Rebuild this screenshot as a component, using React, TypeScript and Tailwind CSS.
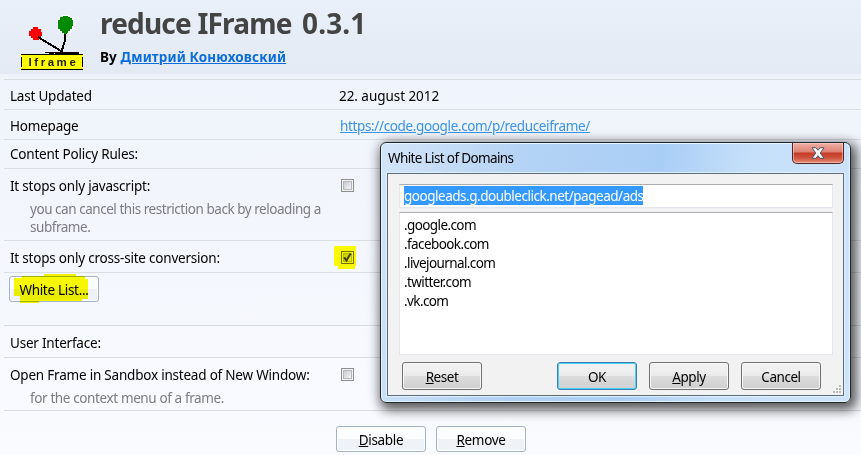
import type { ReactNode } from "react";

function Row({ className, label, children }: { className: string; label: ReactNode; children?: ReactNode }) {
  return (
    <div className={`box-border flex shrink-0 border-b border-[#d9dde4] pl-[6px] leading-[18px] ${className}`}>
      <div className="w-[330px] shrink-0 tracking-[-0.21px] whitespace-nowrap">{label}</div>
      {children}
    </div>
  );
}

function CheckBox({ checked = false }: { checked?: boolean }) {
  return (
    <div
      className={
        checked
          ? "grid h-[13px] w-[13px] place-items-center border border-[#727200] bg-[#f8f800] p-px"
          : "grid h-[13px] w-[13px] place-items-center border border-[#8e8f8f] bg-[#f4f4f4] p-px"
      }
    >
      <div
        className={
          checked
            ? "h-[9px] w-[9px] border border-[#b5b800] bg-linear-to-br from-[#c9cc00] to-[#f3f300]"
            : "h-[9px] w-[9px] border border-[#b4b8be] bg-linear-to-br from-[#c6cad0] to-[#f6f6f6]"
        }
      >
        {checked && (
          <svg width="9" height="9" viewBox="0 0 9 9" className="-mt-px -ml-px block overflow-visible">
            <path d="M1.2 4.2 L3.4 7.6 L7.6 0.6" fill="none" stroke="#3f4500" strokeWidth="2" />
          </svg>
        )}
      </div>
    </div>
  );
}

function PageButton({ children }: { children: ReactNode }) {
  return (
    <button className="h-[26px] w-[90px] rounded-[3px] border border-[#a3b3c5] bg-linear-to-b from-[#fcfdfe] from-50% to-[#eff2f6] to-50% pt-[2px] leading-[18px] shadow-[inset_0_0_0_1px_#ffffff]">
      {children}
    </button>
  );
}

function DialogButton({ children, primary = false }: { children: ReactNode; primary?: boolean }) {
  return (
    <button
      className={`h-[28px] w-[80px] shrink-0 rounded-[3px] border bg-[linear-gradient(#f3f3f3,#ebebeb_48%,#dddddd_50%,#cfcfcf)] pt-px leading-[18px] tracking-[-0.45px] ${
        primary
          ? "border-[#3c7fb1] shadow-[inset_0_0_0_1px_#48d0f8]"
          : "border-[#707070] shadow-[inset_0_0_0_1px_#f9f9f9]"
      }`}
    >
      {children}
    </button>
  );
}

function Logo() {
  return (
    <svg width="66" height="56" viewBox="0 0 66 56" className="block">
      <path d="M41 1 h7 v1 h3 v2 h2 v4 h1 v4 h-1 v3 h-2 v3 h-2 v2 h-2 v1 h-5 v-1 h-2 v-2 h-2 v-3 h-2 v-10 h2 v-2 h3z" fill="#fff" />
      <path d="M42 2 h5 v1 h2 v1 h2 v2 h1 v6 h-1 v3 h-2 v2 h-2 v2 h-1 v1 h-3 v-1 h-2 v-2 h-2 v-2 h-2 v-9 h2 v-3 h3z" fill="#008a00" />
      <path d="M12 13 h5 v2 h3 v3 h1 v4 h-1 v2 h-2 v2 h-6 v-2 h-2 v-2 h-2 v-5 h2 v-2 h2z" fill="#f00" />
      <path d="M17 23 L40 37 M44.5 20 L43.5 28 L40.5 38" fill="none" stroke="#000" strokeWidth="2" shapeRendering="crispEdges" />
      <path d="M24 38 h34 v1 h-25 v1 h-5 v-1 h-4z M34 39 h24 v1 h-24z" fill="#000" />
      <rect x="0" y="41" width="62" height="14" fill="#ff0" />
      <path d="M0 40 h62 v1 h-62z M0 55 h62 v1 h-62z M0 43 h1 v10 h-1z M61 43 h1 v10 h-1z" fill="#000" />
      <text x="7.5" y="52" textLength="47" fontFamily="Liberation Sans, sans-serif" fontSize="11.5" fontWeight="700" fill="#222">
        Iframe
      </text>
    </svg>
  );
}

const domains = [".google.com", ".facebook.com", ".livejournal.com", ".twitter.com", ".vk.com"];

function Dialog() {
  return (
    <div className="absolute top-[142px] left-[380px] flex h-[261px] w-[471px] flex-col rounded-[6px] border border-[#20282f] bg-[linear-gradient(100deg,#d3e5f8_0%,#b4d3f5_28%,#a9cef5_55%,#c5dffa_72%,#cfe4fb_100%)] px-[6px] pb-[6px] shadow-[inset_0_0_0_1px_#e6f3ff,3px_4px_12px_3px_rgba(0,0,0,0.65)]">
      <div className="flex h-[30px] shrink-0 items-start justify-between pl-px">
        <span className="pt-[6px] leading-[18px] tracking-[-0.63px]">White List of Domains</span>
        <div className="grid h-[21px] w-[52px] place-items-center rounded-b-[5px] border border-t-0 border-[#50252a] bg-[linear-gradient(#f0b0a5,#dd8073_45%,#c53a25_50%,#cf5540_75%,#e58d78)] shadow-[inset_0_0_0_1px_rgba(255,210,200,0.6)]">
          <svg width="14" height="12" viewBox="0 0 14 12">
            <path
              d="M1 .7 H4.8 L7 3.2 L9.2 .7 H13 L9.3 6 L13 11.3 H9.2 L7 8.8 L4.8 11.3 H1 L4.7 6z"
              fill="#f5f5f5"
              stroke="#535666"
            />
          </svg>
        </div>
      </div>
      <div className="relative flex grow flex-col border border-[#5c6c7b] bg-[#f2f2f2] px-[11px] pt-[10px] shadow-[0_0_0_1px_#e0f0ff]">
        <div className="flex h-[24px] w-[434px] shrink-0 items-start border border-[#e3e6ec] border-t-[#abadb3] bg-white pt-px pl-1">
          <span className="h-[19px] w-[239px] bg-[#3399ff] leading-[20px] tracking-[-0.48px] whitespace-nowrap text-white">
            googleads.g.doubleclick.net/pagead/ads
          </span>
        </div>
        <ul className="mt-[4px] h-[143px] w-[434px] shrink-0 border border-[#e3e6ec] border-t-[#abadb3] bg-white pt-[3px] pl-[4px] leading-[19px] tracking-[-0.6px]">
          {domains.map((domain) => (
            <li key={domain}>{domain}</li>
          ))}
        </ul>
        <div className="mt-[7px] flex gap-[12px] pl-[3px]">
          <DialogButton><u>R</u>eset</DialogButton>
          <div className="w-[51px] shrink-0" />
          <DialogButton primary>OK</DialogButton>
          <DialogButton><u>A</u>pply</DialogButton>
          <DialogButton>Cancel</DialogButton>
        </div>
        <svg width="8" height="8" className="absolute right-[2px] bottom-[2px]">
          <path
            d="M6 0h2v2h-2z M3 3h2v2h-2z M6 3h2v2h-2z M0 6h2v2h-2z M3 6h2v2h-2z M6 6h2v2h-2z"
            fill="#bcbcbc"
          />
        </svg>
      </div>
    </div>
  );
}

export default function App() {
  return (
    <main className="relative flex h-[455px] w-[861px] flex-col overflow-hidden bg-linear-to-b from-[#edf2fa] to-[#f9fbff] font-['Noto_Sans','Open_Sans',sans-serif] text-[13.5px] tracking-[-0.3px] text-black">
      <header className="flex h-[74px] shrink-0 bg-linear-to-b from-[#e9f0fa] to-[#e3eaf4] pl-[21px]">
        <div className="w-[79px] shrink-0 pt-[14px]">
          <Logo />
        </div>
        <div>
          <h1 className="pt-[4px] text-[28px] leading-[38px] font-bold tracking-[-0.8px] whitespace-nowrap text-[#444]">
            reduce IFrame <span className="ml-[4px] tracking-[0.1px]">0.3.1</span>
          </h1>
          <p className="pt-[6px] leading-[18px] font-bold tracking-[0.13px] whitespace-nowrap">
            By <a className="text-[#0b6cda] underline">Дмитрий Конюховский</a>
          </p>
        </div>
      </header>
      <section className="flex flex-col pl-[4px]">
        <div className="h-[6px] shrink-0 border-b border-[#d9dde4]" />
        <Row className="h-[30px] pt-[7px]" label="Last Updated">
          <span className="-ml-px tracking-[-0.05px]">22. august 2012</span>
        </Row>
        <Row className="h-[30px] pt-[7px]" label="Homepage">
          <a className="tracking-[-0.36px] text-[#3b93e8] underline">https://code.google.com/p/reduceiframe/</a>
        </Row>
        <Row className="h-[29px] pt-[5px]" label="Content Policy Rules:" />
        <Row
          className="h-[72px] pt-[8px]"
          label={
            <>
              It stops only javascript:
              <div className="pt-[5px] pl-[20px] tracking-[-0.46px] text-[#7c7c84]">
                you can cancel this restriction back by reloading a<br />
                subframe.
              </div>
            </>
          }
        >
          <div className="pt-[2px] pl-px">
            <CheckBox />
          </div>
        </Row>
        <Row className="h-[32px] pt-[8px]" label="It stops only cross-site conversion:">
          <div className="relative pt-[2px] pl-px">
            <svg width="24" height="24" className="absolute top-[-3px] left-[-6px]">
              <path d="M0 0h22v20h-1v3h-17v-3h-4z" fill="#f8f800" />
            </svg>
            <div className="relative">
              <CheckBox checked />
            </div>
          </div>
        </Row>
        <div className="h-[53px] shrink-0 border-b border-[#d9dde4] pt-[3px] pl-[5px]">
          <div className="relative h-[26px] w-[90px]">
            <PageButton>White List...</PageButton>
            <svg width="76" height="31" className="absolute top-[-3px] left-[5px] mix-blend-multiply">
              <path d="M0 5h8v-2h22v-2h32v2h9v3h3v20h-6v2h-43v2h-19v-7h-6z" fill="#fafa00" />
            </svg>
          </div>
        </div>
        <Row className="h-[32px] pt-[8px]" label="User Interface:" />
        <Row
          className="h-[53px] pt-[8px]"
          label={
            <>
              Open Frame in Sandbox instead of New Window:
              <div className="pt-[5px] pl-[20px] tracking-[-0.38px] text-[#7c7c84]">for the context menu of a frame.</div>
            </>
          }
        >
          <div className="pt-[2px] pl-px">
            <CheckBox />
          </div>
        </Row>
        <div className="flex gap-[10px] pt-[15px] pl-[332px]">
          <PageButton><u>D</u>isable</PageButton>
          <PageButton><u>R</u>emove</PageButton>
        </div>
      </section>
      <Dialog />
    </main>
  );
}
